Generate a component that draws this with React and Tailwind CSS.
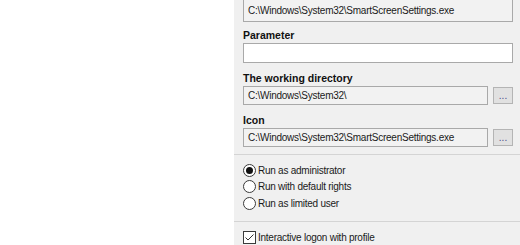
import React from "react";

const font = { fontFamily: '"Liberation Sans", Arial, sans-serif' };

const PathField = ({ value, withButton, white, className = "" }) => (
  <div className={`flex items-center gap-[5px] ${className}`}>
    <div
      className={`flex-1 h-full border border-[#a9a9a9] flex items-center px-[4px] text-[10px] tracking-[-0.25px] text-[#1a1a1a] ${
        white ? "bg-white" : "bg-[#f2f2f2]"
      }`}
    >
      {value}
    </div>
    {withButton && (
      <button className="w-[20px] h-[17px] bg-[#e1e1e1] border border-[#b4b4b4] flex items-end justify-center pb-[2px] text-[10px] leading-none text-[#4a4a8a]">
        ...
      </button>
    )}
  </div>
);

const Label = ({ children, className = "" }) => (
  <div className={`text-[10.5px] font-bold text-[#111] leading-[14px] ${className}`}>{children}</div>
);

const Radio = ({ checked, children }) => (
  <label className="flex items-center h-[16.5px] gap-[2px] text-[10px] tracking-[-0.25px] text-[#1a1a1a]">
    <span className="w-[13px] h-[13px] rounded-full border border-[#3a3a3a] bg-white flex items-center justify-center">
      {checked && <span className="w-[7px] h-[7px] rounded-full bg-[#111]" />}
    </span>
    {children}
  </label>
);

export default function App() {
  return (
    <div className="w-[520px] h-[245px] flex bg-white overflow-hidden" style={font}>
      <div className="w-[234px] shrink-0 bg-white" />
      <div className="flex-1 bg-[#f0f0f0] flex flex-col">
        <div className="pl-[9px] pr-[7px] flex flex-col">
          <PathField
            value="C:\Windows\System32\SmartScreenSettings.exe"
            className="h-[22px] [&>div]:border-t-0"
          />
          <Label className="mt-[6px]">Parameter</Label>
          <PathField value="" white className="h-[20px] mt-[1px]" />
          <Label className="mt-[8px]">The working directory</Label>
          <PathField value="C:\Windows\System32\" withButton className="h-[19px] mt-[1px]" />
          <Label className="mt-[8px]">Icon</Label>
          <PathField
            value="C:\Windows\System32\SmartScreenSettings.exe"
            withButton
            className="h-[19px] mt-[1px]"
          />
        </div>
        <div className="mt-[7px] h-px bg-[#d4d4d4]" />
        <div className="pl-[9px] pt-[7px] flex flex-col">
          <Radio checked>Run as administrator</Radio>
          <Radio>Run with default rights</Radio>
          <Radio>Run as limited user</Radio>
        </div>
        <div className="mt-[9px] h-px bg-[#d4d4d4]" />
        <div className="pl-[9px] pt-[8px]">
          <label className="flex items-center gap-[2px] text-[10px] tracking-[-0.25px] text-[#1a1a1a]">
            <span className="w-[13px] h-[13px] border border-[#3a3a3a] bg-white flex items-center justify-center">
              <svg width="11" height="11" viewBox="0 0 11 11">
                <path d="M1.5 5.5 L4 8 L9.5 2.5" fill="none" stroke="#333" strokeWidth="1" />
              </svg>
            </span>
            Interactive logon with profile
          </label>
        </div>
      </div>
    </div>
  );
}
